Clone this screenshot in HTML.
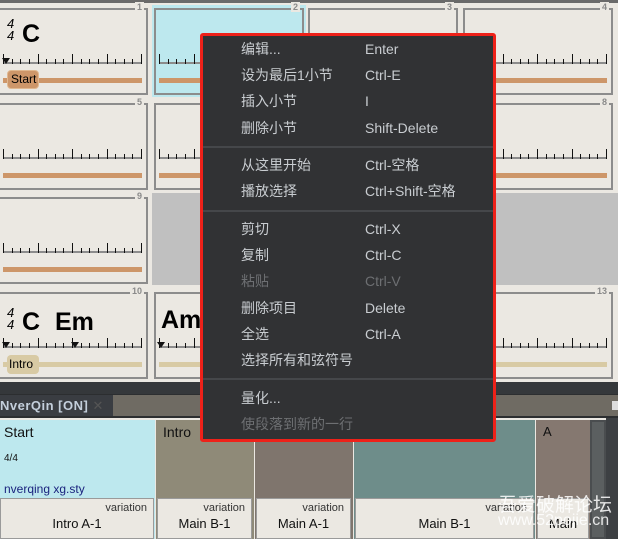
<!DOCTYPE html>
<html><head><meta charset="utf-8">
<style>
*{margin:0;padding:0;box-sizing:border-box}
body{width:618px;height:539px;overflow:hidden;background:#ebe8e2;position:relative;font-family:"Liberation Sans","Noto Sans CJK SC",sans-serif}
.a{position:absolute}
.cell{position:absolute;border:2px solid #8c8c8c;width:150px;height:87px}
.num{position:absolute;top:-8px;right:2px;font-size:9px;color:#8a8a8a;background:#ebe8e2;padding:0 2px;line-height:10px;font-weight:bold}
.rul{position:absolute;left:3px;top:52px;width:139px;height:2px;background:#8c8c8c}
.bar{position:absolute;left:3px;top:68px;width:139px;height:5px;background:#cd9669}
.tk{position:absolute;bottom:0;width:1px;background:#111}
.menu{position:absolute;left:200px;top:33px;width:296px;height:409px;background:#313234;border:3px solid #ee2119;border-radius:3px}
.mi{position:absolute;left:38px;font-size:14px;color:#c9cdd1;line-height:18px}
.sc{position:absolute;left:162px;font-size:14px;color:#c9cdd1;line-height:18px;white-space:nowrap}
.dis{color:#6d6f72}
.sep{position:absolute;left:0;right:0;height:2px;background:#45474a}
.var{position:absolute;top:498px;height:41px;background:#ebe8e2;border:1px solid #9a9a9a}
.var .v{position:absolute;right:6px;top:3px;font-size:11px;color:#333}
.var .n{position:absolute;left:0;right:0;top:17px;text-align:center;font-size:13px;color:#111}
</style></head><body>
<div class="a" style="left:0;top:0;width:618px;height:3px;background:#6a6a6a"></div>
<div class="a" style="left:152px;top:5px;width:154px;height:92px;background:#bde8ee"></div>
<div class="a" style="left:152px;top:193px;width:466px;height:92px;background:#c0c0c0"></div>
<div id="cells"></div>
<div class="a" style="left:7px;top:18px;font-size:13px;font-style:italic;line-height:12px">4<br>4</div>
<div class="a" style="left:22px;top:20px;font-size:25px;font-weight:bold">C</div>
<div class="a" style="left:7px;top:70px;width:32px;height:19px;background:#cd9669;border:1px solid #e0b890;border-radius:4px;font-size:12px;line-height:17px;padding-left:3px">Start</div>
<div class="a" style="left:7px;top:307px;font-size:13px;font-style:italic;line-height:12px">4<br>4</div>
<div class="a" style="left:22px;top:308px;font-size:25px;font-weight:bold">C</div>
<div class="a" style="left:55px;top:308px;font-size:25px;font-weight:bold">Em</div>
<div class="a" style="left:161px;top:306px;font-size:25px;font-weight:bold">Am</div>
<div class="a" style="left:7px;top:355px;width:32px;height:19px;background:#d8caa4;border-radius:4px;font-size:12px;line-height:19px;padding-left:2px">Intro</div>
<div class="a" style="left:0;top:382px;width:618px;height:12px;background:#35383b"></div>
<div class="a" style="left:0;top:394px;width:618px;height:24px;background:#6f6b63;border-top:1px solid #2c2e30;border-bottom:2px solid #2c2e30"></div>
<div class="a" style="left:0;top:395px;width:113px;height:21px;background:#3a3d42;color:#c4cfdc;font-size:13px;font-weight:bold;line-height:21px;letter-spacing:0.5px">NverQin [ON] <span style="color:#555;font-weight:normal">✕</span></div>
<div class="a" style="left:612px;top:401px;width:6px;height:9px;background:#ddd"></div>
<div class="a" style="left:0;top:420px;width:155px;height:119px;background:#bde8ee"></div>
<div class="a" style="left:156px;top:420px;width:98px;height:119px;background:#8f8a78"></div>
<div class="a" style="left:255px;top:420px;width:98px;height:119px;background:#7f756d"></div>
<div class="a" style="left:354px;top:420px;width:181px;height:119px;background:#6e8d8a"></div>
<div class="a" style="left:536px;top:420px;width:54px;height:119px;background:#857870"></div>
<div class="a" style="left:590px;top:420px;width:16px;height:119px;background:#5b5f60;border:2px solid #4a4d4f"></div>
<div class="a" style="left:606px;top:418px;width:12px;height:121px;background:#3d4043"></div>
<div class="a" style="left:4px;top:424px;font-size:14px;color:#111">Start</div>
<div class="a" style="left:4px;top:453px;font-size:10px;color:#111">4/4</div>
<div class="a" style="left:4px;top:482px;font-size:12px;color:#1a237e">nverqing xg.sty</div>
<div class="a" style="left:163px;top:424px;font-size:14px;color:#111">Intro</div>
<div class="a" style="left:543px;top:424px;font-size:13px;color:#111">A</div>
<div class="var" style="left:0;width:154px"><span class="v">variation</span><div class="n">Intro A-1</div></div>
<div class="var" style="left:157px;width:95px"><span class="v">variation</span><div class="n">Main B-1</div></div>
<div class="var" style="left:256px;width:95px"><span class="v">variation</span><div class="n">Main A-1</div></div>
<div class="var" style="left:355px;width:179px"><span class="v">variation</span><div class="n">Main B-1</div></div>
<div class="var" style="left:537px;width:52px"><div class="n">Main</div></div>
<div class="a" style="left:498px;top:490px;font-size:19px;color:rgba(255,255,255,0.85)">吾爱破解论坛</div>
<div class="a" style="left:498px;top:512px;font-size:16px;color:rgba(255,255,255,0.85)">www.52pojie.cn</div>
<div class="menu">
<div class="mi" style="top:4px">编辑...</div><div class="sc" style="top:4px">Enter</div>
<div class="mi" style="top:30px">设为最后1小节</div><div class="sc" style="top:30px">Ctrl-E</div>
<div class="mi" style="top:56px">插入小节</div><div class="sc" style="top:56px">I</div>
<div class="mi" style="top:83px">删除小节</div><div class="sc" style="top:83px">Shift-Delete</div>
<div class="sep" style="top:110px"></div>
<div class="mi" style="top:120px">从这里开始</div><div class="sc" style="top:120px">Ctrl-空格</div>
<div class="mi" style="top:146px">播放选择</div><div class="sc" style="top:146px">Ctrl+Shift-空格</div>
<div class="sep" style="top:174px"></div>
<div class="mi" style="top:184px">剪切</div><div class="sc" style="top:184px">Ctrl-X</div>
<div class="mi" style="top:210px">复制</div><div class="sc" style="top:210px">Ctrl-C</div>
<div class="mi dis" style="top:236px">粘贴</div><div class="sc dis" style="top:236px">Ctrl-V</div>
<div class="mi" style="top:263px">删除项目</div><div class="sc" style="top:263px">Delete</div>
<div class="mi" style="top:289px">全选</div><div class="sc" style="top:289px">Ctrl-A</div>
<div class="mi" style="top:315px">选择所有和弦符号</div>
<div class="sep" style="top:342px"></div>
<div class="mi" style="top:353px">量化...</div>
<div class="mi dis" style="top:379px">使段落到新的一行</div>
</div>
<script>
var xs=[-2,154,308,463],ys=[8,103,197,292],h='';
var nums=[[1,2,3,4],[5,6,7,8],[9,0,0,0],[10,11,12,13]];
for(var r=0;r<4;r++)for(var c=0;c<4;c++){
 if(r==2&&c>0)continue;
 var col=r==3?'#d8caa4':'#cd9669';
 h+='<div class="cell" style="left:'+xs[c]+'px;top:'+ys[r]+'px"><span class="num">'+nums[r][c]+'</span><div class="rul">';
 for(var i=0;i<=16;i++){var maj=i%4==0;h+='<div class="tk" style="left:'+(i*138/16)+'px;height:'+(maj?10:5)+'px"></div>';}
 h+='</div><div class="bar" style="background:'+col+'"></div></div>';
}
document.getElementById('cells').innerHTML=h;
</script>
<div class="a" style="left:2px;top:58px;width:0;height:0;border-left:4px solid transparent;border-right:4px solid transparent;border-top:6px solid #111"></div>
<div class="a" style="left:2px;top:342px;width:0;height:0;border-left:4px solid transparent;border-right:4px solid transparent;border-top:6px solid #111"></div>
<div class="a" style="left:71px;top:342px;width:0;height:0;border-left:4px solid transparent;border-right:4px solid transparent;border-top:6px solid #111"></div>
<div class="a" style="left:157px;top:342px;width:0;height:0;border-left:4px solid transparent;border-right:4px solid transparent;border-top:6px solid #111"></div>
</body></html>
